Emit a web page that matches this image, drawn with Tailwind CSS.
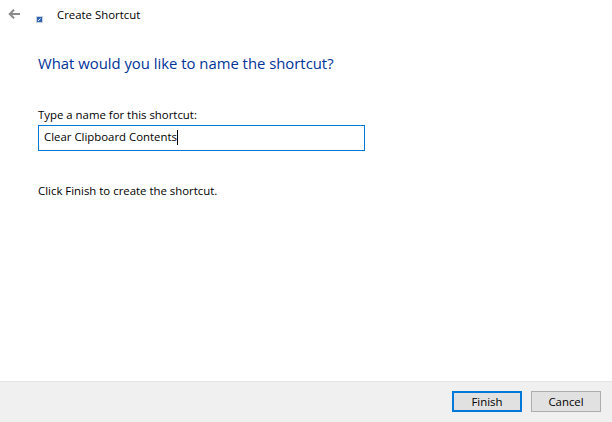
<!DOCTYPE html>
<html>
<head>
<meta charset="utf-8">
<script src="https://cdn.jsdelivr.net/npm/@tailwindcss/browser@4"></script>
</head>
<body class="bg-white">
<div class="w-[612px] h-[422px] flex flex-col overflow-hidden bg-white text-[11.400px] text-black font-['Open_Sans','Noto_Sans',sans-serif]">
  <div class="h-[30px] flex items-center shrink-0">
    <svg class="ml-[8px] mt-[-2px]" width="12" height="10" viewBox="0 0 12 10" fill="none" stroke="#8c8c8c" stroke-width="2"><path d="M12 5H2M6 .7 1.700 5 6 9.300"/></svg>
    <svg class="ml-[16px] mt-[8px]" width="7" height="7" viewBox="0 0 7 7"><rect width="7" height="7" fill="#c9d3e2"/><rect x="1" y="1" width="5" height="5" fill="#2f62b0"/><path d="M2 5 4.500 2.500" stroke="#fff" stroke-width="1"/></svg>
    <span class="ml-[14px] mt-[-1px] leading-[16px]">Create Shortcut</span>
  </div>
  <div class="flex-1 pl-[38px] flex flex-col">
    <h1 class="mt-[23px] text-[14.850px] leading-[20px] font-normal text-[#003399]">What would you like to name the shortcut?</h1>
    <label class="mt-[34px] leading-[16px]">Type a name for this shortcut:</label>
    <div class="mt-[2px] w-[327px] h-[26px] border border-[#0078d7] pl-[5px] pb-[2px] flex items-center leading-[16px]">Clear Clipboard Contents<span class="w-px h-[15px] bg-black"></span></div>
    <p class="mt-[32px] leading-[16px]">Click Finish to create the shortcut.</p>
  </div>
  <div class="h-[41px] shrink-0 bg-[#f0f0f0] border-t border-[#e3e3e3] flex justify-end items-start pt-[9px] pr-[11px] gap-[9px]">
    <button class="w-[70px] h-[21px] bg-[#e1e1e1] border-2 border-[#0078d7] flex items-center justify-center leading-none">Finish</button>
    <button class="w-[70px] h-[21px] bg-[#e1e1e1] border border-[#adadad] flex items-center justify-center leading-none">Cancel</button>
  </div>
</div>
</body>
</html>
